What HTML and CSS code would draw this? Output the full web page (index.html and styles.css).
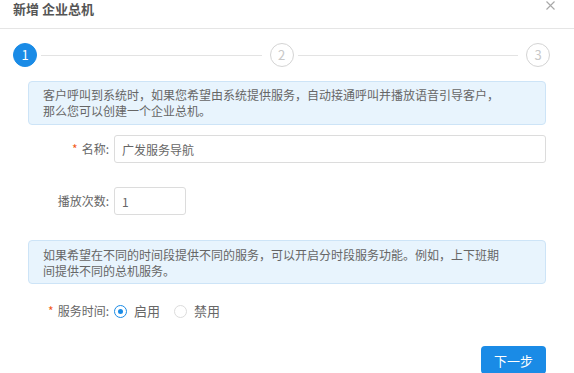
FILE: index.html
```html
<!DOCTYPE html>
<html lang="zh-CN">
<head>
    <meta charset="UTF-8">
    <title>新增 企业总机</title>
    <link rel="stylesheet" href="styles.css">
</head>
<body>
    <div class="dialog">
        <div class="dialog-header">
            <h2>新增 企业总机</h2>
            <svg class="close" width="9" height="9" viewBox="0 0 9 9">
                <path d="M0.5 0.5 L8.5 8.5 M8.5 0.5 L0.5 8.5" stroke="#a8a8a8" stroke-width="1.1" fill="none"/>
            </svg>
        </div>

        <div class="steps">
            <span class="step active">1</span>
            <span class="step-line"></span>
            <span class="step">2</span>
            <span class="step-line"></span>
            <span class="step">3</span>
        </div>

        <div class="tip">
            客户呼叫到系统时，如果您希望由系统提供服务，自动接通呼叫并播放语音引导客户，<br>
            那么您可以创建一个企业总机。
        </div>

        <div class="form-row">
            <label><span class="req">*</span>名称:</label>
            <input type="text" class="input wide" value="广发服务导航">
        </div>

        <div class="form-row gap">
            <label>播放次数:</label>
            <input type="text" class="input short" value="1">
        </div>

        <div class="tip tip-second">
            如果希望在不同的时间段提供不同的服务，可以开启分时段服务功能。例如，上下班期<br>
            间提供不同的总机服务。
        </div>

        <div class="form-row radio-row">
            <label><span class="req">*</span>服务时间:</label>
            <div class="radios">
                <span class="radio checked"></span><span class="radio-text">启用</span>
                <span class="radio"></span><span class="radio-text">禁用</span>
            </div>
        </div>

        <div class="footer">
            <button type="button" class="btn-primary">下一步</button>
        </div>
    </div>
</body>
</html>
```

FILE: styles.css
```css
body {
    margin: 0;
    font-family: "Noto Sans CJK SC", "Noto Sans", sans-serif;
    font-size: 12px;
    line-height: 16px;
    color: #666;
    background-color: #ffffff;
}

.dialog {
    width: 574px;
}

.dialog-header {
    display: flex;
    justify-content: space-between;
    height: 28px;
    padding: 0 19px 0 13px;
    border-bottom: 1px solid #e5e5e5;
}

.dialog-header h2 {
    margin: 0;
    font-size: 13px;
    font-weight: bold;
    line-height: 18px;
    color: #555;
}

.close {
    margin-top: 1px;
}

.steps {
    display: flex;
    align-items: center;
    margin: 14px 24px 0 13px;
}

.step {
    width: 22px;
    height: 22px;
    border: 1px solid #d4d4d4;
    border-radius: 50%;
    color: #c8c8c8;
    font-size: 13px;
    line-height: 22px;
    text-align: center;
    flex-shrink: 0;
}

.step.active {
    background-color: #1a8be6;
    border-color: #1a8be6;
    color: #ffffff;
}

.step-line {
    flex: 1;
    height: 1px;
    margin: 0 8px 0 4px;
    background-color: #e3e3e3;
}

.tip {
    margin: 14px 28px 0 28px;
    padding: 5px 14px;
    line-height: 16px;
    background-color: #e8f4fd;
    border: 1px solid #cde4f7;
    border-radius: 4px;
    color: #666;
}

.tip-second {
    margin-top: 25px;
    padding-top: 6px;
    padding-bottom: 4px;
}

.form-row {
    display: flex;
    align-items: center;
    margin: 10px 28px 0 28px;
    height: 28px;
}

.form-row.gap {
    margin-top: 24px;
}

.form-row.radio-row {
    margin-top: 13px;
}

.form-row label {
    width: 81px;
    padding-right: 5px;
    text-align: right;
    color: #666;
    flex-shrink: 0;
}

.req {
    color: #f25c1b;
    margin-right: 4px;
}

.input {
    box-sizing: border-box;
    height: 28px;
    padding: 0 7px;
    border: 1px solid #dcdcdc;
    border-radius: 3px;
    font-family: inherit;
    font-size: 12px;
    color: #666;
    outline: none;
}

.input.wide {
    flex: 1;
}

.input.short {
    width: 72px;
}

.radios {
    display: flex;
    align-items: center;
}

.radio {
    box-sizing: border-box;
    width: 13px;
    height: 13px;
    border: 1px solid #dcdcdc;
    border-radius: 50%;
    position: relative;
}

.radio.checked {
    border-color: #1a8be6;
}

.radio.checked::after {
    content: "";
    position: absolute;
    left: 3px;
    top: 3px;
    width: 5px;
    height: 5px;
    border-radius: 50%;
    background-color: #1a8be6;
}

.radio-text {
    margin: 0 14px 0 7px;
    font-size: 13px;
}

.footer {
    display: flex;
    justify-content: flex-end;
    margin: 21px 28px 0 0;
}

.btn-primary {
    width: 65px;
    height: 28px;
    padding: 0;
    border: none;
    border-radius: 4px;
    background-color: #1a8be6;
    color: #ffffff;
    font-family: inherit;
    font-size: 13px;
}
```
